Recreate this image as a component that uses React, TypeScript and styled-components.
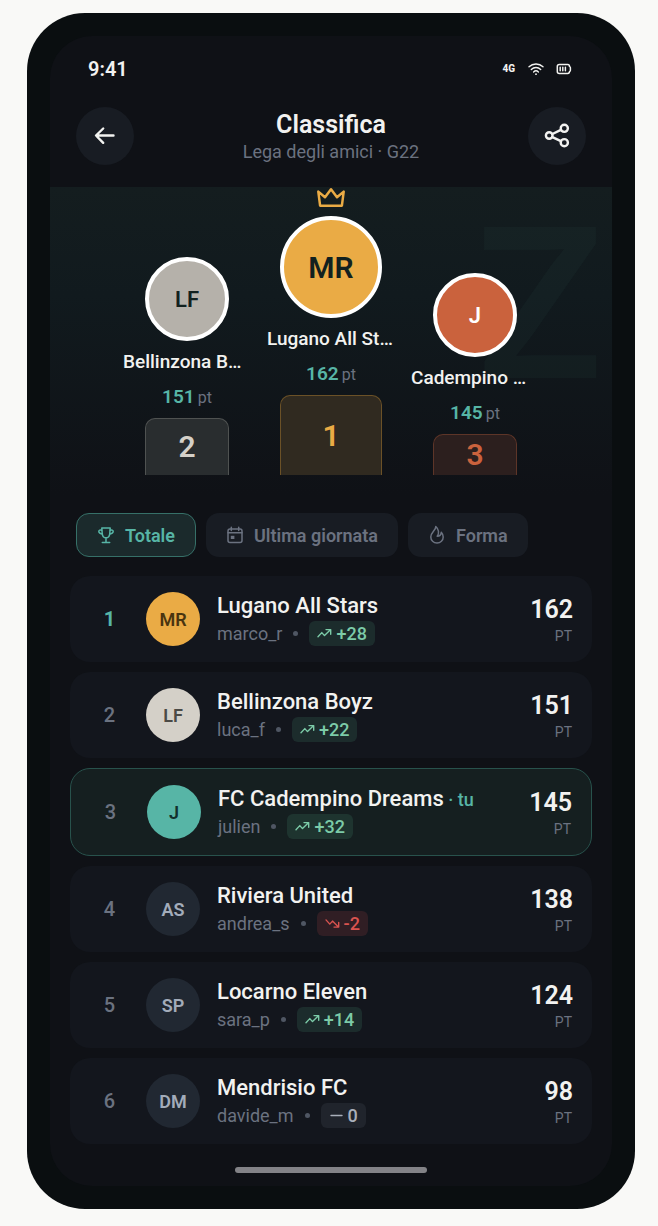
import React, { useState } from 'react';
import styled, { createGlobalStyle } from 'styled-components';

const color = {
  page: '#f9f9f7',
  frame: '#0a0e10',
  screen: '#0f1116',
  surface: '#13161d',
  raised: '#181c23',
  text: '#f2f2f0',
  muted: '#6b7280',
  teal: '#57b5a6',
  gold: '#eaab45',
};

const GlobalStyle = createGlobalStyle`
  *, *::before, *::after { box-sizing: border-box; }
  body { margin: 0; background: ${color.page}; }
  button { font: inherit; border: 0; margin: 0; cursor: pointer; }
  ol, h1, p { margin: 0; padding: 0; }
`;

const Page = styled.div`
  padding: 13px 23px 17px 27px;
  background: ${color.page};
  color: ${color.text};
  font-family: Roboto, 'Liberation Sans', sans-serif;
`;

const Phone = styled.div`
  padding: 23px;
  border-radius: 58px;
  background: ${color.frame};
`;

const Screen = styled.main`
  overflow: hidden;
  border-radius: 42px;
  background: ${color.screen};
`;

const StatusBar = styled.div`
  display: flex;
  align-items: center;
  justify-content: space-between;
  height: 66px;
  padding: 0 40px 0 38px;
`;

const Clock = styled.span`
  font-size: 20px;
  font-weight: 600;
  line-height: 26px;
`;

const StatusIcons = styled.div`
  display: flex;
  align-items: center;
  gap: 12px;
`;

const Network = styled.span`
  margin-right: 1px;
  font-size: 10px;
  font-weight: 800;
  line-height: 12px;
`;

const Header = styled.header`
  display: flex;
  align-items: center;
  justify-content: space-between;
  padding: 5px 26px 22px;
`;

const RoundButton = styled.button`
  display: grid;
  place-items: center;
  width: 58px;
  height: 58px;
  padding: 0;
  border-radius: 50%;
  background: ${color.raised};
  color: ${color.text};
`;

const Heading = styled.div`
  padding-top: 2px;
  text-align: center;
`;

const Title = styled.h1`
  font-size: 25px;
  font-weight: 600;
  line-height: 30px;
`;

const Subtitle = styled.p`
  color: ${color.muted};
  font-size: 18px;
  line-height: 24px;
`;

const Podium = styled.section`
  position: relative;
  display: flex;
  align-items: flex-end;
  justify-content: center;
  gap: 16px;
  padding-bottom: 20px;
  background: linear-gradient(180deg, #141d1f 0%, #111a1e 35%, ${color.screen} 100%);
`;

const Watermark = styled.span`
  position: absolute;
  top: -10px;
  right: 4px;
  color: rgba(87, 181, 166, 0.045);
  font-family: Inter, sans-serif;
  font-size: 208px;
  font-weight: 600;
  line-height: 250px;
  pointer-events: none;
`;

const Place = styled.div`
  position: relative;
  display: flex;
  flex-direction: column;
  align-items: center;
  width: 128px;
`;

const Crown = styled.svg`
  width: 30px;
  height: 21px;
  margin-bottom: 8px;
`;

const PlaceAvatar = styled.div<{ $size: number; $bg: string; $ink: string }>`
  display: grid;
  place-items: center;
  width: ${(p) => p.$size}px;
  height: ${(p) => p.$size}px;
  border: 4px solid #fff;
  border-radius: 50%;
  background: ${(p) => p.$bg};
  color: ${(p) => p.$ink};
  font-size: ${(p) => (p.$size > 90 ? 30 : 22)}px;
  font-weight: 600;
`;

const PlaceName = styled.span`
  width: 100%;
  margin-top: 8px;
  overflow: hidden;
  font-size: 19px;
  font-weight: 500;
  line-height: 26px;
  white-space: nowrap;
`;

const PlacePoints = styled.span`
  display: flex;
  align-items: baseline;
  gap: 3px;
  height: 26px;
  margin: 9px 0 8px;
  color: ${color.teal};
  font-size: 19px;
  font-weight: 600;
  line-height: 26px;
`;

const Unit = styled.small`
  color: ${color.muted};
  font-size: 16px;
  font-weight: 400;
`;

const Step = styled.div<{ $w: number; $h: number; $bg: string; $line: string; $ink: string }>`
  display: grid;
  place-items: center;
  width: ${(p) => p.$w}px;
  height: ${(p) => p.$h}px;
  border: 1px solid ${(p) => p.$line};
  border-bottom: 0;
  border-radius: 10px 10px 0 0;
  background: ${(p) => p.$bg};
  color: ${(p) => p.$ink};
  font-size: 30px;
  font-weight: 600;
  line-height: 36px;
`;

const Tabs = styled.div`
  display: flex;
  gap: 10px;
  padding: 18px 26px 19px;
`;

const Tab = styled.button<{ $active: boolean }>`
  display: flex;
  align-items: center;
  gap: 10px;
  height: 44px;
  padding: 0 20px;
  border: ${(p) => (p.$active ? '1px solid #367068' : '0')};
  border-radius: 13px;
  background: ${(p) => (p.$active ? '#1b2a2c' : color.raised)};
  color: ${(p) => (p.$active ? color.teal : color.muted)};
  font-size: 18px;
  font-weight: 600;
  white-space: nowrap;
`;

const List = styled.ol`
  display: flex;
  flex-direction: column;
  gap: 10px;
  padding: 0 20px;
  list-style: none;
`;

const Row = styled.li<{ $me: boolean }>`
  display: grid;
  grid-template-columns: 39px 54px 1fr auto;
  align-items: center;
  column-gap: 17px;
  padding: 16px 19px 16px 20px;
  border: ${(p) => (p.$me ? '1px solid #28524c' : '0')};
  border-radius: 20px;
  background: ${(p) => (p.$me ? '#151f20' : color.surface)};
`;

const Rank = styled.span<{ $first: boolean }>`
  color: ${(p) => (p.$first ? color.teal : color.muted)};
  font-size: 20px;
  font-weight: ${(p) => (p.$first ? 700 : 500)};
  text-align: center;
`;

const Avatar = styled.div<{ $bg: string; $ink: string }>`
  display: grid;
  place-items: center;
  width: 54px;
  height: 54px;
  border-radius: 50%;
  background: ${(p) => p.$bg};
  color: ${(p) => p.$ink};
  font-size: 18px;
  font-weight: 600;
`;

const TeamName = styled.div`
  font-size: 22px;
  font-weight: 500;
  line-height: 28px;
`;

const You = styled.span`
  color: ${color.teal};
  font-size: 18px;
  line-height: 20px;
`;

const Meta = styled.div`
  display: flex;
  align-items: center;
  gap: 11px;
  margin-top: 1px;
  color: ${color.muted};
  font-size: 18px;
  line-height: 25px;
`;

const Dot = styled.i`
  width: 5px;
  height: 5px;
  border-radius: 50%;
  background: #4f5663;
`;

const tones = {
  up: { bg: 'rgba(87, 181, 140, 0.14)', ink: '#7ccba8' },
  down: { bg: 'rgba(217, 83, 79, 0.15)', ink: '#d9534f' },
  flat: { bg: '#20242c', ink: '#a9afba' },
};
type Trend = keyof typeof tones;

const Delta = styled.span<{ $trend: Trend }>`
  display: flex;
  align-items: center;
  gap: 4px;
  height: 25px;
  padding: 0 8px;
  border-radius: 6px;
  background: ${(p) => tones[p.$trend].bg};
  color: ${(p) => tones[p.$trend].ink};
  font-weight: 500;
`;

const Score = styled.div`
  padding-top: 2px;
  text-align: right;
`;

const Points = styled.div`
  font-size: 25px;
  font-weight: 600;
  line-height: 30px;
`;

const PointsUnit = styled.div`
  margin-top: 2px;
  padding-right: 1px;
  color: ${color.muted};
  font-size: 14px;
  line-height: 18px;
`;

const HomeBar = styled.div`
  width: 192px;
  height: 6px;
  margin: 23px auto 13px;
  border-radius: 3px;
  background: #838387;
`;

const Stroke = styled.svg`
  flex: none;
  fill: none;
  stroke: currentColor;
  stroke-linecap: round;
  stroke-linejoin: round;
`;

const BackIcon = () => (
  <Stroke width="24" height="24" viewBox="0 0 24 24" strokeWidth="2.4" aria-hidden>
    <path d="M20.500 11.500H3.200M10.200 4.500 3 11.500l7.200 7.300" />
  </Stroke>
);

const ShareIcon = () => (
  <Stroke width="28" height="28" viewBox="0 0 28 28" strokeWidth="2.4" aria-hidden>
    <circle cx="6.200" cy="13.500" r="3.300" />
    <circle cx="21.300" cy="6.300" r="3.600" />
    <circle cx="21.300" cy="20.700" r="3.600" />
    <path d="m9.400 12 8.500-4.200M9.400 15.100l8.500 4.100" />
  </Stroke>
);

const WifiIcon = () => (
  <Stroke width="16" height="14" viewBox="0 0 16 14" strokeWidth="1.4" aria-hidden>
    <path d="M1 4.800a10.200 10.200 0 0 1 14 0M3.300 7.400a6.900 6.900 0 0 1 9.400 0M5.600 9.900a3.500 3.500 0 0 1 4.800 0" />
    <circle cx="8" cy="12.200" r=".9" fill="currentColor" stroke="none" />
  </Stroke>
);

const BatteryIcon = () => (
  <Stroke width="16" height="12" viewBox="0 0 16 12" strokeWidth="1.5" aria-hidden>
    <path d="M3.300 1.600h8.400q1.800 0 1.800 1.800.9.3.9 1.300v2.600q0 1-.9 1.300 0 1.800-1.800 1.800H3.300q-2 0-2-2V3.600q0-2 2-2Z" />
    <path d="M4.200 4.300v3.400M6.800 4.300v3.400M9.400 4.300v3.400" />
  </Stroke>
);

const TrophyIcon = () => (
  <Stroke width="18" height="18" viewBox="0 0 18 18" strokeWidth="1.5" aria-hidden>
    <path d="M4.800 2h8.400l-.4 5.200c-.2 2.700-1.600 4.600-3.800 4.600S5.400 9.900 5.200 7.200ZM9 12v4.300M5.300 16.400h7.400" />
    <path d="M4.700 4.300C3.300 3.700 1.800 4 1.800 5.400s1.500 2.100 3.300 2.500M13.300 4.300c1.400-.6 2.900-.3 2.900 1.100s-1.500 2.100-3.300 2.500" />
  </Stroke>
);

const CalendarIcon = () => (
  <Stroke width="18" height="18" viewBox="0 0 18 18" strokeWidth="1.5" aria-hidden>
    <rect x="2" y="3" width="14" height="13.400" rx="2" />
    <path d="M2 6.800h14M5.300 1.200v3.200M12.700 1.200v3.200" />
    <rect x="4.800" y="9.800" width="3.600" height="3.200" fill="currentColor" stroke="none" />
  </Stroke>
);

const FlameIcon = () => (
  <Stroke width="18" height="20" viewBox="0 0 18 20" strokeWidth="1.5" aria-hidden>
    <path d="M7.800 1.500c.3 3.400-5 5.700-5 10.400 0 3.500 2.700 6.100 6.200 6.100s6.200-2.600 6.200-6c0-2-.7-3.400-1.900-4.700-.3 2.300-1.700 3.900-4.100 4C11.600 8.200 10.600 3.900 7.800 1.500Z" />
  </Stroke>
);

const trendPath: Record<Trend, string> = {
  up: 'M1 9.800 4.800 5.600l2.700 3L13.200 3M9 2.600h4.700v4.700',
  down: 'M1 2.900l3.800 4.200 2.700-3 5.700 5.600M9 10.100h4.700V5.400',
  flat: 'M2 6.500h11',
};

const TrendIcon = ({ trend }: { trend: Trend }) => (
  <Stroke width="15" height="13" viewBox="0 0 15 13" strokeWidth="1.4" aria-hidden>
    <path d={trendPath[trend]} />
  </Stroke>
);

const podium = [
  { place: 2, initials: 'LF', name: 'Bellinzona B…', pts: 151, size: 84, height: 57, bg: '#b5b1aa', ink: '#12211f', step: '#292d2f', line: '#4f5251', digit: '#d4d0c8' },
  { place: 1, initials: 'MR', name: 'Lugano All St…', pts: 162, size: 102, height: 80, bg: color.gold, ink: '#12211f', step: '#302a20', line: '#6b5127', digit: color.gold },
  { place: 3, initials: 'J', name: 'Cadempino …', pts: 145, size: 84, height: 41, bg: '#ca623d', ink: '#ffffff', step: '#2c1f1e', line: '#5d3528', digit: '#ca623d' },
];

const tabs = [
  { label: 'Totale', Icon: TrophyIcon },
  { label: 'Ultima giornata', Icon: CalendarIcon },
  { label: 'Forma', Icon: FlameIcon },
];

type Team = { initials: string; name: string; user: string; delta: string; trend: Trend; pts: number; bg: string; ink: string; me?: boolean };

const slate = { bg: '#212832', ink: '#a3acba' };

const teams: Team[] = [
  { initials: 'MR', name: 'Lugano All Stars', user: 'marco_r', delta: '+28', trend: 'up', pts: 162, bg: color.gold, ink: '#4a3510' },
  { initials: 'LF', name: 'Bellinzona Boyz', user: 'luca_f', delta: '+22', trend: 'up', pts: 151, bg: '#d4d0c8', ink: '#4b4a46' },
  { initials: 'J', name: 'FC Cadempino Dreams', user: 'julien', delta: '+32', trend: 'up', pts: 145, bg: color.teal, ink: '#12302c', me: true },
  { initials: 'AS', name: 'Riviera United', user: 'andrea_s', delta: '-2', trend: 'down', pts: 138, ...slate },
  { initials: 'SP', name: 'Locarno Eleven', user: 'sara_p', delta: '+14', trend: 'up', pts: 124, ...slate },
  { initials: 'DM', name: 'Mendrisio FC', user: 'davide_m', delta: '0', trend: 'flat', pts: 98, ...slate },
];

export default function App() {
  const [active, setActive] = useState(0);

  return (
    <Page>
      <GlobalStyle />
      <Phone>
        <Screen>
          <StatusBar>
            <Clock>9:41</Clock>
            <StatusIcons>
              <Network>4G</Network>
              <WifiIcon />
              <BatteryIcon />
            </StatusIcons>
          </StatusBar>

          <Header>
            <RoundButton aria-label="Indietro"><BackIcon /></RoundButton>
            <Heading>
              <Title>Classifica</Title>
              <Subtitle>Lega degli amici · G22</Subtitle>
            </Heading>
            <RoundButton aria-label="Condividi"><ShareIcon /></RoundButton>
          </Header>

          <Podium>
            <Watermark aria-hidden>Z</Watermark>
            {podium.map((p) => (
              <Place key={p.place}>
                {p.place === 1 && (
                  <Crown viewBox="0 0 30 21" fill="none" stroke={color.gold} strokeWidth="2.5" strokeLinejoin="round" aria-hidden>
                    <path d="M2.300 4.600 9 10.300 15 2.300l6 8 6.700-5.700-1.800 14.100H4.100Z" />
                  </Crown>
                )}
                <PlaceAvatar $size={p.size} $bg={p.bg} $ink={p.ink}>{p.initials}</PlaceAvatar>
                <PlaceName>{p.name}</PlaceName>
                <PlacePoints>{p.pts} <Unit>pt</Unit></PlacePoints>
                <Step $w={p.size} $h={p.height} $bg={p.step} $line={p.line} $ink={p.digit}>{p.place}</Step>
              </Place>
            ))}
          </Podium>

          <Tabs>
            {tabs.map(({ label, Icon }, i) => (
              <Tab key={label} $active={i === active} aria-pressed={i === active} onClick={() => setActive(i)}>
                <Icon />
                {label}
              </Tab>
            ))}
          </Tabs>

          <List>
            {teams.map((t, i) => (
              <Row key={t.user} $me={!!t.me}>
                <Rank $first={i === 0}>{i + 1}</Rank>
                <Avatar $bg={t.bg} $ink={t.ink}>{t.initials}</Avatar>
                <div>
                  <TeamName>
                    {t.name}
                    {t.me && <You> · tu</You>}
                  </TeamName>
                  <Meta>
                    {t.user}
                    <Dot />
                    <Delta $trend={t.trend}>
                      <TrendIcon trend={t.trend} />
                      {t.delta}
                    </Delta>
                  </Meta>
                </div>
                <Score>
                  <Points>{t.pts}</Points>
                  <PointsUnit>PT</PointsUnit>
                </Score>
              </Row>
            ))}
          </List>

          <HomeBar />
        </Screen>
      </Phone>
    </Page>
  );
}
